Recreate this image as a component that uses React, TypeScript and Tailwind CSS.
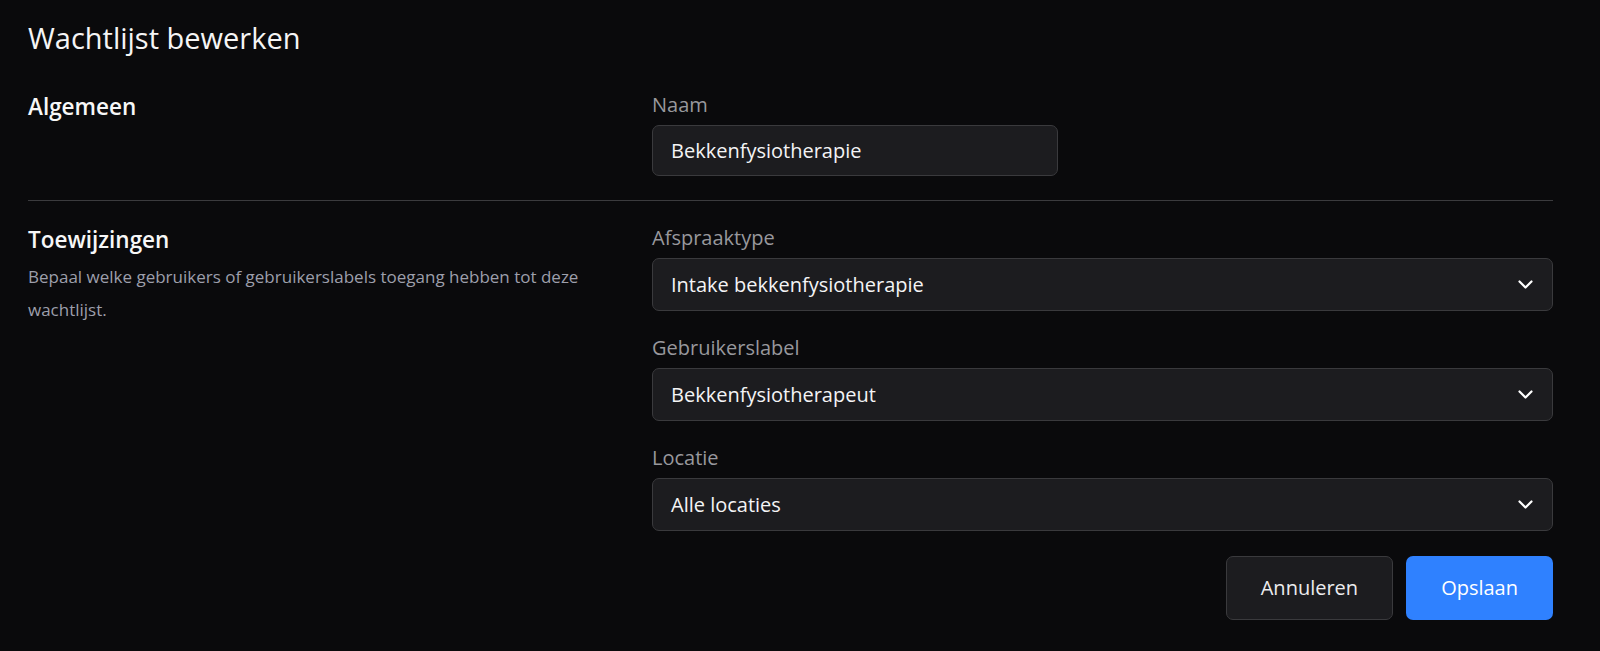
import React from 'react';

const font = { fontFamily: '"Open Sans", "Liberation Sans", sans-serif' };

function Chevron() {
  return (
    <svg width="15" height="9" viewBox="0 0 15 9" fill="none" className="shrink-0">
      <path d="M1.5 1.5 7.5 7.5 13.5 1.5" stroke="#ffffff" strokeWidth="2.2" strokeLinecap="round" strokeLinejoin="round" />
    </svg>
  );
}

interface SelectFieldProps {
  label: string;
  value: string;
}

function SelectField({ label, value }: SelectFieldProps) {
  return (
    <div>
      <div className="text-[20px] leading-[28px] text-[#98989d] mb-[6px]">{label}</div>
      <div className="h-[53px] flex items-center justify-between pl-[18px] pr-[19px] rounded-[7px] border border-[#3a3a3d] bg-[#1c1c1f] text-[20px] text-[#f4f4f5]">
        <span>{value}</span>
        <Chevron />
      </div>
    </div>
  );
}

export default function App() {
  return (
    <div style={font} className="min-h-screen bg-[#0a0a0c] text-white pl-[28px] pr-[47px] pt-[18px]">
      <h1 className="text-[29px] leading-[40px] font-medium text-[#f5f5f5]">Wachtlijst bewerken</h1>

      {/* Algemeen */}
      <div className="grid grid-cols-[600px_1fr] gap-[24px] mt-[33px]">
        <div>
          <h2 className="text-[22.5px] leading-[32px] font-semibold text-[#f7f7f7]">Algemeen</h2>
        </div>
        <div>
          <div className="text-[20px] leading-[28px] text-[#98989d] mb-[6px]">Naam</div>
          <div className="w-[406px] h-[51px] flex items-center px-[18px] rounded-[7px] border border-[#3a3a3d] bg-[#1c1c1f] text-[20px] text-[#f4f4f5]">
            Bekkenfysiotherapie
          </div>
        </div>
      </div>

      <div className="h-px bg-[#3b3b3e] mt-[24px]" />

      {/* Toewijzingen */}
      <div className="grid grid-cols-[600px_1fr] gap-[24px] mt-[23px]">
        <div>
          <h2 className="text-[22.5px] leading-[32px] font-semibold text-[#f7f7f7]">Toewijzingen</h2>
          <p className="mt-[4px] text-[17px] leading-[33px] text-[#9d9fab] pr-[20px]">
            Bepaal welke gebruikers of gebruikerslabels toegang hebben tot deze wachtlijst.
          </p>
        </div>
        <div className="flex flex-col gap-[23px]">
          <SelectField label="Afspraaktype" value="Intake bekkenfysiotherapie" />
          <SelectField label="Gebruikerslabel" value="Bekkenfysiotherapeut" />
          <SelectField label="Locatie" value="Alle locaties" />
          <div className="flex justify-end gap-[13px] mt-[2px]">
            <button className="h-[64px] px-[34px] rounded-[7px] border border-[#3a3a3d] bg-[#1c1c1f] text-[20px] text-[#ececee]">
              Annuleren
            </button>
            <button className="h-[64px] px-[35px] rounded-[7px] bg-[#2f81ff] text-[20px] text-white">
              Opslaan
            </button>
          </div>
        </div>
      </div>
    </div>
  );
}
